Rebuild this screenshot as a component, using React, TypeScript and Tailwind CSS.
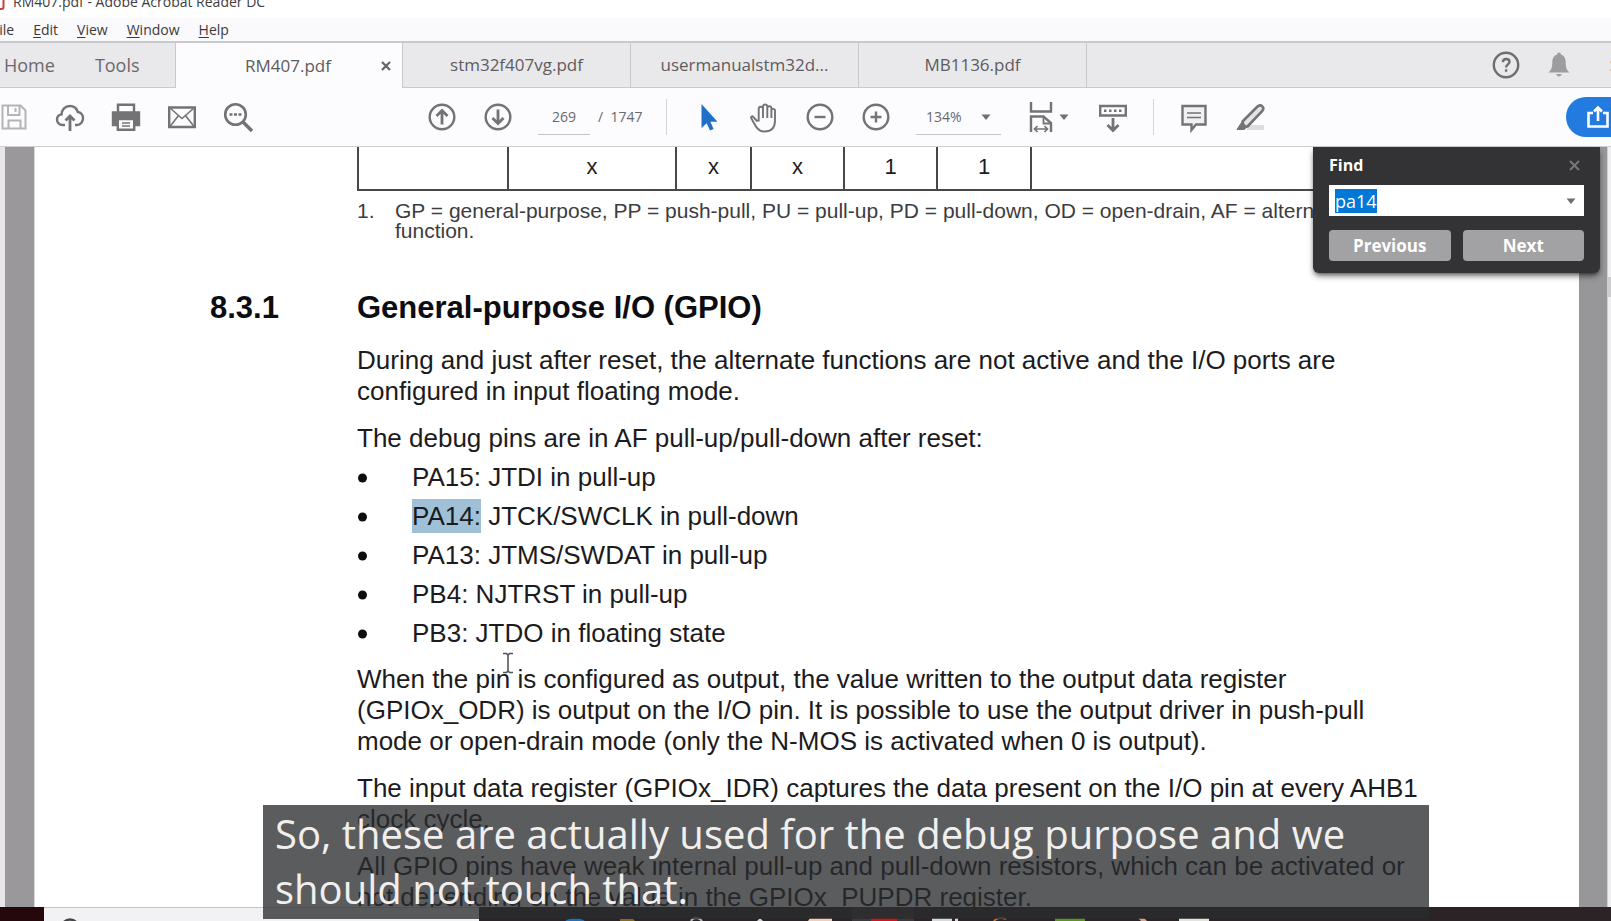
import { useEffect, useRef, type ReactNode } from "react";

const documentTabs = [
  { name: "stm32f407vg.pdf" },
  { name: "usermanualstm32d..." },
  { name: "MB1136.pdf" },
];

const debugPins = [
  { pin: "PA15:", role: "JTDI in pull-up", found: false },
  { pin: "PA14:", role: "JTCK/SWCLK in pull-down", found: true },
  { pin: "PA13:", role: "JTMS/SWDAT in pull-up", found: false },
  { pin: "PB4:", role: "NJTRST in pull-up", found: false },
  { pin: "PB3:", role: "JTDO in floating state", found: false },
];

function MenuItem({ first, rest }: { first: string; rest: string }) {
  return (
    <button type="button" className="whitespace-nowrap">
      <span className="underline underline-offset-2">{first}</span>
      {rest}
    </button>
  );
}

function ToolButton({ label, children }: { label: string; children: ReactNode }) {
  return (
    <button type="button" aria-label={label} className="flex h-full w-14 shrink-0 items-center justify-center">
      <svg width="32" height="32" viewBox="0 0 32 32" fill="none" stroke="#737275" strokeWidth="2.4">
        {children}
      </svg>
    </button>
  );
}

function Caret() {
  return (
    <svg width="10" height="6" viewBox="0 0 10 6" className="shrink-0">
      <path d="M0.5 0.5h9L5 6z" fill="#6e6e70" />
    </svg>
  );
}

function TabBar() {
  return (
    <nav className="flex h-[47px] shrink-0 border-y border-[#c9c8ca] border-t-2 bg-[#e9e8ea] text-[17px] text-[#6a696c]">
      <div className="flex w-44 shrink-0 items-center gap-10 border-r border-[#c9c8ca] pl-1 text-lg">
        <button type="button">Home</button>
        <button type="button">Tools</button>
      </div>
      <div className="-mb-px flex w-[227px] shrink-0 items-center justify-end gap-[50px] border-r border-[#c9c8ca] bg-[#fcfbfd] pr-[11px]">
        <button type="button" className="text-[#5d5c5f]">RM407.pdf</button>
        <button type="button" aria-label="Close tab">
          <svg width="10" height="10" viewBox="0 0 10 10" stroke="#636266" strokeWidth="2.2">
            <path d="M1 1l8 8M9 1l-8 8" />
          </svg>
        </button>
      </div>
      {documentTabs.map((tab) => (
        <button
          type="button"
          key={tab.name}
          className="w-[228px] shrink-0 border-r border-[#c9c8ca] text-center text-[#5d5c5f]"
        >
          {tab.name}
        </button>
      ))}
      <div className="ml-auto flex items-center gap-7">
        <button type="button" aria-label="Help">
          <svg width="28" height="28" viewBox="0 0 28 28" fill="none" stroke="#6e6d70" strokeWidth="2.4">
            <circle cx="14" cy="14" r="12.2" />
            <path d="M10.8 11.2c.2-2.200 1.600-3.200 3.400-3.200 2 0 3.300 1.100 3.300 2.800 0 2.600-3.400 2.500-3.400 5.600M14.100 18.300v2.400" />
          </svg>
        </button>
        <button type="button" aria-label="Notifications">
          <svg width="22" height="26" viewBox="0 0 22 26" fill="#9d9c9f">
            <path d="M11 0.500c1.200 0 1.900.8 1.900 2 3.300 1 4.800 3.800 4.800 7.500 0 5 .8 8 3.800 10.500H.5c3-2.500 3.800-5.500 3.800-10.500 0-3.700 1.500-6.500 4.800-7.500 0-1.200.7-2 1.900-2zM8.300 22h5.400c-.3 1.600-1.300 2.500-2.700 2.500S8.600 23.600 8.300 22z" />
          </svg>
        </button>
        <span className="-mr-2 ml-3 text-[#4f4e51]">S</span>
      </div>
    </nav>
  );
}

function Toolbar() {
  return (
    <div className="flex h-[59px] shrink-0 items-center overflow-hidden border-b border-[#cfced0] bg-[#fcfbfd] text-sm text-[#6a696c]">
      <div className="-ml-3.5 flex h-full">
        <ToolButton label="Save">
          <g stroke="#b5b3b8" strokeWidth="2">
            <path d="M4.500 4.500h18l5 5v18h-23z" />
            <path d="M10 5v9h11.500V5M17.500 7v4M10.500 27v-7.500h12V27" />
          </g>
        </ToolButton>
        <ToolButton label="Upload">
          <path d="M11 24H8.500C5.400 24 3 21.700 3 18.700c0-2.800 2-4.900 4.600-5.300C7.700 8.600 11.200 5 15.800 5c3.900 0 6.900 2.400 8 6 3.100.4 5.200 3 5.200 6.300 0 3.700-2.600 6.700-6 6.700h-2" />
          <path d="M16 30V15.500M11.500 19.500L16 15l4.500 4.500" strokeWidth="2.800" />
        </ToolButton>
        <ToolButton label="Print">
          <path d="M8 11V3.800h16V11" />
          <path d="M3 11.500h26V24h-4v-6H7v6H3z" fill="#737275" />
          <path d="M7.800 18h16.400v10.800H7.800z" fill="#fcfbfd" />
          <path d="M12 22h8M12 25h8" strokeWidth="1.500" />
        </ToolButton>
        <ToolButton label="Email">
          <path d="M3.200 6.500h25.600v19.500H3.200z" />
          <path d="M4 7l12 10.500L28 7M4 25.500l8.500-11M28 25.500l-8.500-11" strokeWidth="1.600" />
        </ToolButton>
        <ToolButton label="Search">
          <circle cx="13.500" cy="13.500" r="10.300" strokeWidth="2.600" />
          <path d="M21 21l9 9" strokeWidth="3.600" />
          <path d="M7.500 13.500h3M12 13.500h3M16.500 13.500h3" strokeWidth="2.400" />
        </ToolButton>
      </div>
      <div className="ml-[148px] flex h-full">
        <ToolButton label="Previous page">
          <circle cx="16" cy="16" r="12.300" />
          <path d="M16 23.500V9.500M10.500 15L16 9.500l5.500 5.500" strokeWidth="2.800" />
        </ToolButton>
        <ToolButton label="Next page">
          <circle cx="16" cy="16" r="12.300" />
          <path d="M16 8.500v14M10.500 17l5.500 5.500 5.500-5.500" strokeWidth="2.800" />
        </ToolButton>
      </div>
      <input
        aria-label="Page number"
        defaultValue="269"
        className="ml-3 h-9 w-[52px] shrink-0 border-b border-[#c4c3c6] text-center outline-none"
      />
      <span className="ml-2 w-11 shrink-0 whitespace-nowrap">/&nbsp; 1747</span>
      <div className="ml-6 h-9 w-px shrink-0 bg-[#d5d4d7]" />
      <div className="ml-[13px] flex h-full">
        <ToolButton label="Select">
          <path d="M9.500 3v24l5.200-4.800 3.300 7.300 3.600-1.600-3.200-7.100h7.100z" fill="#2070c8" stroke="none" />
        </ToolButton>
        <ToolButton label="Pan">
          <path
            d="M9.500 20.500L5.200 15.800c-1-1.100-2.600.1-1.900 1.400 2 3.800 3.800 7.200 5.900 9.900 1.600 2 3.700 3.400 7.300 3.400 5.800 0 10.500-3 10.500-11V9.800c0-2.600-3.600-2.600-3.600 0V7.200c0-2.600-4.100-2.600-4.100 0V5.500c0-2.600-4.300-2.600-4.300 0v2.200c0-2.600-4.300-2.600-4.300 0v12.800M15 7.700V17M19.300 7.200V17M23.400 9.800V17"
            strokeWidth="1.900"
          />
        </ToolButton>
        <ToolButton label="Zoom out">
          <circle cx="16" cy="16" r="12.300" />
          <path d="M10.500 16h11" />
        </ToolButton>
        <ToolButton label="Zoom in">
          <circle cx="16" cy="16" r="12.300" />
          <path d="M10.500 16h11M16 10.500v11" />
        </ToolButton>
      </div>
      <button
        type="button"
        aria-label="Zoom level"
        className="ml-3 flex h-9 w-[85px] shrink-0 items-center justify-between border-b border-[#c4c3c6] pl-2.5 pr-2.5"
      >
        134%
        <Caret />
      </button>
      <button type="button" aria-label="Fit width" className="ml-6 flex h-full shrink-0 items-center gap-0.5">
        <svg width="32" height="32" viewBox="0 0 32 32" fill="none" stroke="#737275" strokeWidth="2.400">
          <path d="M6 1v9.500h20V1M6 31V15.500h12.500L26 22v9" />
          <path d="M18.500 16v6.500H26" strokeWidth="1.800" />
          <path d="M10 28h12M12.500 25L9.500 28l3 3M19.500 25l3 3-3 3" strokeWidth="1.700" />
        </svg>
        <Caret />
      </button>
      <div className="ml-4 flex h-full">
        <ToolButton label="Scrolling mode">
          <path d="M3.200 5h25.600v9.500H3.200z" />
          <path d="M7 9.800h2.500M12 9.800h2.500M17 9.800h2.500M22 9.800h2.500" />
          <path d="M16 17v12M10.500 24l5.500 5.500 5.500-5.500" strokeWidth="2.800" />
        </ToolButton>
      </div>
      <div className="ml-3 h-9 w-px shrink-0 bg-[#d5d4d7]" />
      <div className="ml-3 flex h-full">
        <ToolButton label="Comment">
          <path d="M4.500 5h23v18.500H18L13.500 29v-5.500h-9z" fill="#f0eff1" />
          <path d="M9 12h14M9 16.500h14" strokeWidth="1.500" />
        </ToolButton>
        <ToolButton label="Highlight">
          <path d="M12 29l4-5h14v5z" fill="#dddcde" stroke="none" />
          <path d="M8.500 20.500L23.500 5.500c1.500-1.500 3.500-1.500 4.800-.2 1.300 1.300 1.200 3.200-.2 4.800L13.500 25.500c-2.500.5-5-2-5-5z" fill="#e4e3e5" strokeWidth="2.600" />
          <path d="M7.500 21.500l5 5-2.500 2H3z" fill="#737275" strokeWidth="1" />
        </ToolButton>
      </div>
      <button
        type="button"
        aria-label="Share"
        className="-mr-5 ml-auto flex h-10 w-[65px] shrink-0 items-center rounded-l-full bg-[#237be0] pl-5"
      >
        <svg width="24" height="24" viewBox="0 0 24 24" fill="none" stroke="#fff" strokeWidth="2.600">
          <path d="M7 8H2.500v13.500h19V8H17M12 16V3M8 6.500l4-4 4 4" />
        </svg>
      </button>
    </div>
  );
}

function FindPanel() {
  const field = useRef<HTMLInputElement>(null);
  useEffect(() => {
    field.current?.focus();
    field.current?.select();
  }, []);

  return (
    <form
      className="absolute right-[11px] top-0 w-[287px] rounded-b-md bg-[#333234] px-4 pb-3 pt-1.5 font-bold text-white shadow-md shadow-black/50"
      onSubmit={(event) => event.preventDefault()}
    >
      <div className="flex h-6 items-center justify-between">
        <label htmlFor="find" className="text-base">Find</label>
        <button type="button" aria-label="Close find" className="mr-1">
          <svg width="11" height="11" viewBox="0 0 11 11" stroke="#77767a" strokeWidth="2">
            <path d="M1 1l9 9M10 1l-9 9" />
          </svg>
        </button>
      </div>
      <div className="mt-2 flex h-[31px] items-center bg-white pl-1.5 pr-2">
        <input
          id="find"
          ref={field}
          defaultValue="pa14"
          className="min-w-0 flex-1 text-lg font-normal leading-6 text-[#333] outline-none selection:bg-[#0078d7] selection:text-white"
        />
        <Caret />
      </div>
      <div className="mt-3.5 grid grid-cols-2 gap-3 text-[17px]">
        <button type="button" className="h-[31px] rounded-sm bg-[#a2a1a3]">Previous</button>
        <button type="button" className="h-[31px] rounded-sm bg-[#a2a1a3]">Next</button>
      </div>
    </form>
  );
}

function ManualPage() {
  return (
    <article className="min-w-0 flex-1 overflow-hidden border-l border-[#d8d7d9] bg-white pl-[175px] font-['Liberation_Sans',Arial,sans-serif] text-[26px] leading-[31px] text-[#1c1b20]">
      <div className="ml-[147px] whitespace-nowrap">
        <table className="w-[1120px] table-fixed border-collapse text-[22px] leading-6">
          <tbody>
            <tr className="h-[43px] border-b-2 border-[#48474a] align-top text-center [&>td]:border-l-2 [&>td]:border-[#48474a] [&>td]:pt-2">
              <td className="w-[150px]" />
              <td className="w-[168px]">x</td>
              <td className="w-[75px]">x</td>
              <td className="w-[93px]">x</td>
              <td className="w-[93px]">1</td>
              <td className="w-[94px]">1</td>
              <td />
            </tr>
          </tbody>
        </table>
        <div className="mt-2.5 flex text-[21px] leading-5 text-[#3d3c40]">
          <span className="w-[38px]">1.</span>
          <p>
            GP = general-purpose, PP = push-pull, PU = pull-up, PD = pull-down, OD = open-drain, AF = alternate
            <br />
            function.
          </p>
        </div>
      </div>
      <h2 className="mt-12 grid grid-cols-[147px_1fr] text-[31px] font-bold leading-[38px] text-[#0d0c10]">
        <span>8.3.1</span>
        <span>General-purpose I/O (GPIO)</span>
      </h2>
      <div className="ml-[147px] mt-[18px] whitespace-nowrap">
        <p>
          During and just after reset, the alternate functions are not active and the I/O ports are
          <br />
          configured in input floating mode.
        </p>
        <p className="mt-4">The debug pins are in AF pull-up/pull-down after reset:</p>
        <ul className="mt-1">
          {debugPins.map((item) => (
            <li key={item.pin} className="flex h-[39px] items-center">
              <span className="w-[55px] shrink-0">
                <svg width="11" height="11" viewBox="0 0 11 11" aria-hidden="true">
                  <circle cx="5.500" cy="6" r="4.500" fill="#0d0c10" />
                </svg>
              </span>
              <span>
                <span className={item.found ? "bg-[#a0c0d8] py-0.5" : ""}>{item.pin}</span> {item.role}
              </span>
            </li>
          ))}
        </ul>
        <p className="mt-[11px]">
          When the pin is configured as output, the value written to the output data register
          <br />
          (GPIOx_ODR) is output on the I/O pin. It is possible to use the output driver in push-pull
          <br />
          mode or open-drain mode (only the N-MOS is activated when 0 is output).
        </p>
        <p className="mt-4">
          The input data register (GPIOx_IDR) captures the data present on the I/O pin at every AHB1
          <br />
          clock cycle.
        </p>
        <p className="mt-4">
          All GPIO pins have weak internal pull-up and pull-down resistors, which can be activated or
          <br />
          not depending on the value in the GPIOx_PUPDR register.
        </p>
      </div>
    </article>
  );
}

function Taskbar() {
  return (
    <footer className="flex h-3.5 shrink-0 overflow-hidden bg-[#2c2326]">
      <div className="w-11 shrink-0 bg-[#25080c]" />
      <div className="w-[435px] shrink-0 border-t border-[#c6c5c7] bg-[#f2f1f3] pl-4">
        <svg width="20" height="13" viewBox="0 0 20 13">
          <circle cx="10" cy="20" r="8.500" fill="none" stroke="#444347" strokeWidth="2.500" />
        </svg>
      </div>
      <svg width="760" height="14" viewBox="479 0 760 14" className="shrink-0">
        <path d="M852 0h62v14h-62z" fill="#3d3a3d" />
        <ellipse cx="575" cy="17" rx="11" ry="6" fill="#1673c6" />
        <path d="M620 12h13l2 2h-15z" fill="#8a6a1c" />
        <path d="M691 14c2-4 8-4 11 0" fill="none" stroke="#b9b8bb" strokeWidth="2" />
        <path d="M757 14l3-3 3 3z" fill="#d2d1d3" />
        <path d="M808 14l2-3h22v3z" fill="#f3cdb8" />
        <path d="M871 11h26v3h-26z" fill="#d9101a" />
        <path d="M932 11h20v3h-20zM955 11h3v3h-3z" fill="#d9d8da" />
        <path d="M994 14c2-3 8-4 12-2" fill="none" stroke="#c87b2e" strokeWidth="2" />
        <path d="M1055 11h30v3h-30z" fill="#5c9420" />
        <path d="M1138 11h6l3 3h-6z" fill="#dda184" />
        <path d="M1179 11h30v3h-30z" fill="#e3e4dd" />
      </svg>
    </footer>
  );
}

export default function App() {
  return (
    <div className="relative flex h-screen flex-col overflow-hidden bg-white font-['Open_Sans','Noto_Sans',sans-serif]">
      <header className="flex h-[18px] shrink-0 items-end overflow-hidden bg-white text-sm leading-6 text-[#3e3d41]">
        <div className="flex w-full items-center gap-2 pb-1">
          <svg width="5" height="24" viewBox="0 0 5 24" fill="none" stroke="#cf3b42" strokeWidth="2">
            <path d="M0 19h1.500c1.500 0 2-.5 2-2V0" />
          </svg>
          <h1 className="whitespace-nowrap">RM407.pdf - Adobe Acrobat Reader DC</h1>
          <button type="button" aria-label="Minimize" className="mb-3 ml-auto mr-10 h-0.5 w-3 bg-[#77767a]" />
        </div>
      </header>
      <div className="flex h-[23px] shrink-0 items-center gap-[19px] bg-[#faf9fb] text-sm font-medium text-[#3a393d]">
        <span className="-ml-2">
          <MenuItem first="F" rest="ile" />
        </span>
        <MenuItem first="E" rest="dit" />
        <MenuItem first="V" rest="iew" />
        <MenuItem first="W" rest="indow" />
        <MenuItem first="H" rest="elp" />
      </div>
      <TabBar />
      <Toolbar />
      <main className="relative flex min-h-0 flex-1">
        <div className="w-[5px] shrink-0 bg-[#e8e6ea]" />
        <div className="w-[29px] shrink-0 bg-[#9a989b]" />
        <ManualPage />
        <div className="w-7 shrink-0 bg-[#979698]" />
        <div className="w-1 shrink-0 border-l border-[#d0cfd1] bg-[#efeef0] pt-[130px]">
          <div className="h-5 bg-[#cdccce]" />
        </div>
        <FindPanel />
        <svg className="absolute left-[501px] top-[505px]" width="14" height="22" viewBox="0 0 14 22" fill="none" stroke="#55545a" strokeWidth="1.600">
          <path d="M2 1.500h3.500L7 3l1.500-1.500H12M7 3v16M2 20.500h3.500L7 19l1.500 1.500H12" />
        </svg>
      </main>
      <Taskbar />
      <div
        role="status"
        className="absolute bottom-0.5 left-[263px] h-[114px] w-[1166px] whitespace-nowrap bg-[rgba(42,43,45,0.77)] pl-3 pt-px text-[40px] leading-[55px] text-[#f1efed]"
      >
        So, these are actually used for the debug purpose and we
        <br />
        should not touch that.
      </div>
    </div>
  );
}
